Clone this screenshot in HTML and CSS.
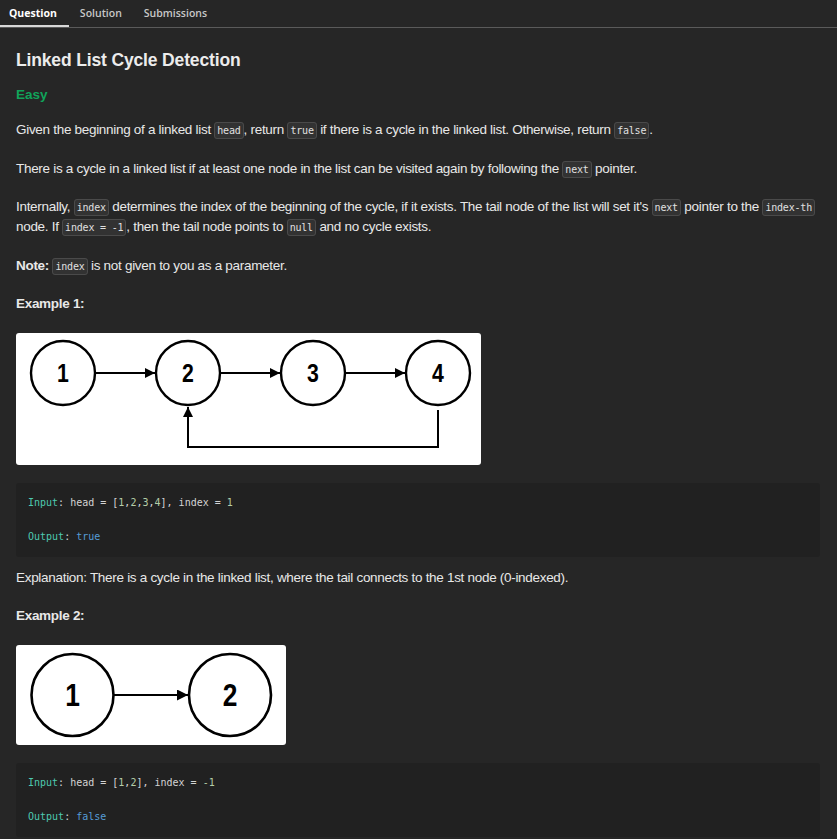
FILE: index.html
```html
<!DOCTYPE html>
<html>
<head>
<meta charset="utf-8">
<link rel="stylesheet" href="styles.css">
</head>
<body>
<nav class="tabs">
  <div class="tab active">Question</div>
  <div class="tab">Solution</div>
  <div class="tab">Submissions</div>
</nav>
<main class="content">
  <h1 class="title">Linked List Cycle Detection</h1>
  <div class="difficulty">Easy</div>
  <p class="para">Given the beginning of a linked list <code class="chip">head</code>, return <code class="chip">true</code> if there is a cycle in the linked list. Otherwise, return <code class="chip">false</code>.</p>
  <p class="para">There is a cycle in a linked list if at least one node in the list can be visited again by following the <code class="chip">next</code> pointer.</p>
  <p class="para">Internally, <code class="chip">index</code> determines the index of the beginning of the cycle, if it exists. The tail node of the list will set it's <code class="chip">next</code> pointer to the <code class="chip">index-th</code> node. If <code class="chip">index = -1</code>, then the tail node points to <code class="chip">null</code> and no cycle exists.</p>
  <p class="para"><strong>Note:</strong> <code class="chip">index</code> is not given to you as a parameter.</p>
  <p class="para heading">Example 1:</p>
  <div class="figure fig1">
    <svg width="465" height="132" viewBox="0 0 465 132">
      <defs>
        <marker id="ah" viewBox="0 0 10 10" refX="10" refY="5" markerWidth="10" markerHeight="10" markerUnits="userSpaceOnUse" orient="auto">
          <path d="M0,0 L10,5 L0,10 z" fill="#000"/>
        </marker>
      </defs>
      <g fill="#fff" stroke="#000" stroke-width="2.4">
        <circle cx="47" cy="40" r="32"/>
        <circle cx="172" cy="40" r="32"/>
        <circle cx="297" cy="40" r="32"/>
        <circle cx="422" cy="40" r="32"/>
      </g>
      <g stroke="#000" stroke-width="2" fill="none">
        <line x1="80" y1="40" x2="139" y2="40" marker-end="url(#ah)"/>
        <line x1="205" y1="40" x2="264" y2="40" marker-end="url(#ah)"/>
        <line x1="330" y1="40" x2="389" y2="40" marker-end="url(#ah)"/>
        <polyline points="422,77 422,114 172,114 172,74" marker-end="url(#ah)"/>
      </g>
      <g class="num" font-size="25">
        <text x="47" y="49" transform="translate(47 0) scale(0.85 1) translate(-47 0)">1</text>
        <text x="172" y="49" transform="translate(172 0) scale(0.85 1) translate(-172 0)">2</text>
        <text x="297" y="49" transform="translate(297 0) scale(0.85 1) translate(-297 0)">3</text>
        <text x="422" y="49" transform="translate(422 0) scale(0.85 1) translate(-422 0)">4</text>
      </g>
    </svg>
  </div>
  <pre class="codeblock"><span class="k">Input</span>: head = [<span class="n">1</span>,<span class="n">2</span>,<span class="n">3</span>,<span class="n">4</span>], index = <span class="n">1</span>

<span class="k">Output</span>: <span class="b">true</span></pre>
  <p class="para expl">Explanation: There is a cycle in the linked list, where the tail connects to the 1st node (0-indexed).</p>
  <p class="para heading">Example 2:</p>
  <div class="figure fig2">
    <svg width="270" height="100" viewBox="0 0 270 100">
      <defs>
        <marker id="ah2" viewBox="0 0 10 10" refX="10" refY="5" markerWidth="11" markerHeight="11" markerUnits="userSpaceOnUse" orient="auto">
          <path d="M0,0 L10,5 L0,10 z" fill="#000"/>
        </marker>
      </defs>
      <g fill="#fff" stroke="#000" stroke-width="2.6">
        <circle cx="56.5" cy="50" r="41"/>
        <circle cx="214" cy="50" r="41"/>
      </g>
      <line x1="98" y1="50" x2="172" y2="50" stroke="#000" stroke-width="2.2" marker-end="url(#ah2)"/>
      <g class="num" font-size="31">
        <text x="56.5" y="61" transform="translate(56.5 0) scale(0.85 1) translate(-56.5 0)">1</text>
        <text x="214" y="61" transform="translate(214 0) scale(0.85 1) translate(-214 0)">2</text>
      </g>
    </svg>
  </div>
  <pre class="codeblock"><span class="k">Input</span>: head = [<span class="n">1</span>,<span class="n">2</span>], index = <span class="n">-1</span>

<span class="k">Output</span>: <span class="b">false</span></pre>
</main>
</body>
</html>
```

FILE: styles.css
```css
html, body {
  margin: 0;
  padding: 0;
  background: #262626;
}
body {
  font-family: "Liberation Sans", Arial, sans-serif;
  color: #e6e6e6;
  width: 837px;
  height: 839px;
  overflow: hidden;
}
.tabs {
  display: flex;
  height: 27px;
  border-bottom: 1px solid #5a5a5a;
  font-family: "Open Sans", "Noto Sans", sans-serif;
  font-size: 10.5px;
}
.tab {
  padding: 0 11px;
  line-height: 26px;
  color: #c8c8c8;
  font-weight: 600;
}
.tab.active {
  padding: 0 12px 0 9px;
  color: #ffffff;
  font-weight: 700;
  border-bottom: 2px solid #d8d8d8;
}
.content {
  padding: 20px 16px 0 16px;
}
.title {
  margin: 0;
  font-size: 17.5px;
  line-height: 24px;
  font-weight: 700;
  letter-spacing: -0.15px;
  color: #ececec;
}
.difficulty {
  margin-top: 13px;
  font-size: 13.5px;
  line-height: 20px;
  font-weight: 700;
  color: #10a35a;
}
.para {
  margin: 15px 0 0 0;
  font-size: 13.5px;
  line-height: 20px;
  color: #e8e8e8;
  letter-spacing: -0.3px;
}
.para + .para {
  margin-top: 18.5px;
}
.heading {
  font-weight: 700;
}
.chip {
  font-family: "DejaVu Sans Mono", "Liberation Mono", monospace;
  font-size: 10px;
  line-height: 1;
  letter-spacing: -0.2px;
  white-space: nowrap;
  color: #e0e0e0;
  background: #323232;
  border: 1px solid #4a4a4a;
  border-radius: 3px;
  padding: 2px 2px;
}
.figure {
  background: #ffffff;
  border-radius: 3px;
  margin-top: 19px;
  display: flex;
}
.fig1 {
  width: 465px;
  height: 132px;
}
.fig2 {
  width: 270px;
  height: 100px;
}
.num text {
  font-family: "Liberation Sans", sans-serif;
  font-weight: 700;
  text-anchor: middle;
  fill: #000;
}
.codeblock {
  margin: 18px 0 0 0;
  width: 804px;
  box-sizing: border-box;
  background: #212121;
  border-radius: 3px;
  padding: 11px 12px 12px 12px;
  font-family: "DejaVu Sans Mono", "Liberation Mono", monospace;
  font-size: 10px;
  line-height: 17px;
  color: #d4d4d4;
}
.codeblock .k { color: #4ec9b0; }
.codeblock .n { color: #b5cea8; }
.codeblock .b { color: #569cd6; }
.expl {
  margin-top: 11px;
}
.para.expl + .para {
  margin-top: 18px;
}
```
